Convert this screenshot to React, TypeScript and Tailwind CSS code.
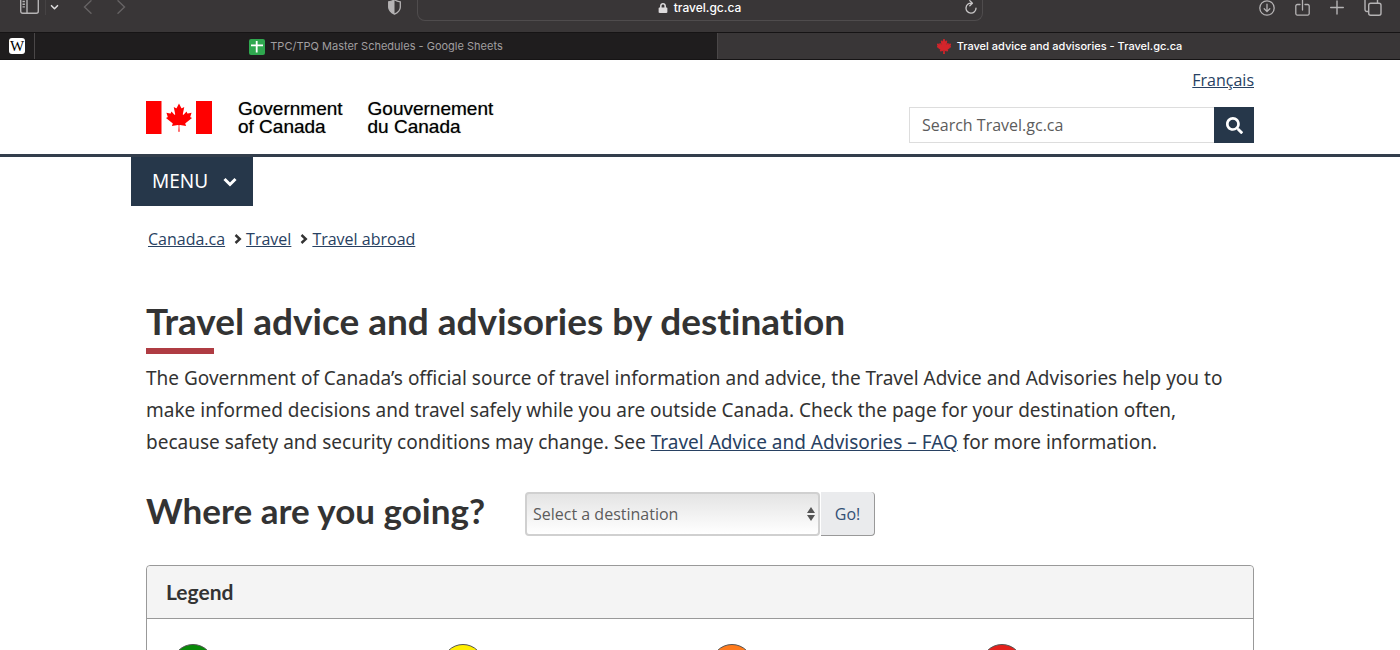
import { FaLock, FaSearch } from 'react-icons/fa'

const LEAF =
  'M4890 4430l-45-863a95 95 0 0 1 111-98l859 151-116-320a65 65 0 0 1 20-73l941-762-212-99a65 65 0 0 1-34-79l186-572-542 115a65 65 0 0 1-73-38l-105-247-423 454a65 65 0 0 1-111-57l204-1052-327 189a65 65 0 0 1-91-27l-332-652-332 652a65 65 0 0 1-91 27l-327-189 204 1052a65 65 0 0 1-111 57l-423-454-105 247a65 65 0 0 1-73 38l-542-115 186 572a65 65 0 0 1-34 79l-212 99 941 762a65 65 0 0 1 20 73l-116 320 859-151a95 95 0 0 1 111 98l-45 863z'

const breadcrumbs = ['Canada.ca', 'Travel', 'Travel abroad']

const riskLevels = [
  { id: 'normal', label: 'Take normal security precautions', color: 'bg-[#088a08]' },
  { id: 'caution', label: 'Exercise a high degree of caution', color: 'bg-[#ffee00]' },
  { id: 'non-essential', label: 'Avoid non-essential travel', color: 'bg-[#ff7a1c]' },
  { id: 'avoid', label: 'Avoid all travel', color: 'bg-[#e4201b]' },
]

function Toolbar() {
  return (
    <div className="grid h-8 grid-cols-[1fr_566px_1fr] items-start text-[#b5b3b4]">
      <div className="flex h-[14px] items-center pr-4 pl-5">
        <button aria-label="Sidebar">
          <svg width="19" height="14" viewBox="0 0 19 14" fill="none" stroke="currentColor" strokeWidth="1.4">
            <rect x="0.7" y="-3" width="17.6" height="16.3" rx="2" />
            <path d="M7 0v13M2.5 1.5h2.4M2.5 4.2h2.4M2.5 6.9h2.4" />
          </svg>
        </button>
        <span className="ml-1.5 h-4 w-px bg-[#464344]" />
        <button aria-label="Tab groups" className="ml-1 text-[#dddbdc]">
          <svg width="9" height="14" viewBox="0 0 9 14" fill="none" stroke="currentColor" strokeWidth="1.6" strokeLinecap="round" strokeLinejoin="round">
            <path d="M1.5 5.7l3 3 3-3" />
          </svg>
        </button>
        <button aria-label="Back" className="ml-6 text-[#666364]">
          <svg width="9" height="14" viewBox="0 0 9 14" fill="none" stroke="currentColor" strokeWidth="1.4" strokeLinecap="round">
            <path d="M8 .8L1.5 7 8 13.2" />
          </svg>
        </button>
        <button aria-label="Forward" className="ml-[25px] text-[#666364]">
          <svg width="9" height="14" viewBox="0 0 9 14" fill="none" stroke="currentColor" strokeWidth="1.4" strokeLinecap="round">
            <path d="M1 .8L7.500 7 1 13.2" />
          </svg>
        </button>
        <button aria-label="Privacy report" className="ml-auto">
          <svg width="13" height="16" viewBox="0 0 13 16" fill="none" stroke="currentColor" strokeWidth="1.3">
            <path d="M6.500 .8c1.800 1.300 3.600 1.900 5.800 2v5.400c0 3-2.300 5.200-5.800 6.900C3 13.400.7 11.200.7 8.200V2.800c2.200-.1 4-.7 5.800-2z" />
            <path d="M6.500 .8v14.300C3 13.400.7 11.200.7 8.200V2.800c2.200-.1 4-.7 5.800-2z" fill="currentColor" stroke="none" />
          </svg>
        </button>
      </div>

      <div className="flex h-[21px] items-start rounded-b-lg border border-t-0 border-[#4f4c4d] pr-[5px] pl-4 text-white">
        <div className="flex flex-1 items-center justify-center gap-1.5 text-[12px] leading-4 font-medium">
          <FaLock size={10} className="text-[#dddbdc]" />
          <span>travel.gc.ca</span>
        </div>
        <button aria-label="Reload" className="text-[#c9c7c8]">
          <svg width="12" height="15" viewBox="0 0 12 15" fill="none" stroke="currentColor" strokeWidth="1.3" strokeLinecap="round" strokeLinejoin="round">
            <path d="M6.500 3.200A5 5 0 1 0 11 8.200M4.800 .6l2.600 2.600-2.600 2.600" />
          </svg>
        </button>
      </div>

      <div className="flex h-[15px] items-center justify-end gap-5 pr-[18px]">
        <button aria-label="Downloads">
          <svg width="16" height="16" viewBox="0 0 16 16" fill="none" stroke="currentColor" strokeWidth="1.3" strokeLinecap="round" strokeLinejoin="round">
            <circle cx="8" cy="8" r="7.200" />
            <path d="M8 4.200v7.200M5.200 8.800L8 11.600l2.800-2.800" />
          </svg>
        </button>
        <button aria-label="Share">
          <svg width="15" height="16" viewBox="0 0 15 16" fill="none" stroke="currentColor" strokeWidth="1.3" strokeLinecap="round" strokeLinejoin="round">
            <path d="M5 4.500H2.300a1.500 1.500 0 0 0-1.500 1.500v7.600a1.500 1.500 0 0 0 1.500 1.500h10.400a1.500 1.500 0 0 0 1.500-1.500V6a1.500 1.500 0 0 0-1.500-1.500H10M7.500 10V-1" />
          </svg>
        </button>
        <button aria-label="New tab">
          <svg width="14" height="16" viewBox="0 0 14 16" fill="none" stroke="currentColor" strokeWidth="1.4" strokeLinecap="round">
            <path d="M7 1v13M.7 7.500h12.600" />
          </svg>
        </button>
        <button aria-label="Tab overview">
          <svg width="18" height="16" viewBox="0 0 18 16" fill="none" stroke="currentColor" strokeWidth="1.4">
            <rect x="4.700" y="3.200" width="12.300" height="12" rx="2" />
            <path d="M4.500 11.500H3a2 2 0 0 1-2-2V-1M13.500 3V0" />
          </svg>
        </button>
      </div>
    </div>
  )
}

function TabBar() {
  return (
    <div className="flex h-7 border-y border-[#161415] bg-[#1f1d1e] text-[11px]">
      <button aria-label="Wikipedia" className="flex w-[35px] items-center justify-center border-r border-[#4a4748]">
        <span className="flex size-4 items-center justify-center rounded-[3px] bg-white font-['Liberation_Serif',serif] text-[15px] leading-none text-black">
          W
        </span>
      </button>
      <button className="flex flex-1 items-center justify-center gap-[5px] pt-px text-[#a19fa0]">
        <svg width="16" height="16" viewBox="0 0 16 16">
          <rect width="16" height="16" rx="2" fill="#2fa84f" />
          <path d="M7.700 2v11.500M2 6.300h12" stroke="#fff" strokeWidth="1.800" />
        </svg>
        TPC/TPQ Master Schedules - Google Sheets
      </button>
      <button className="flex flex-1 items-center justify-center gap-[5px] border-l border-[#4a4748] bg-[#393637] pt-px font-medium text-white">
        <svg width="16" height="15" viewBox="2940 370 3720 4060">
          <path d={LEAF} fill="#d3252b" stroke="#d3252b" strokeWidth="260" />
        </svg>
        Travel advice and advisories - Travel.gc.ca
      </button>
    </div>
  )
}

function SiteHeader() {
  return (
    <header className="border-b-[3px] border-[#333e4c]">
      <div className="mx-auto flex h-[94px] max-w-[1138px] justify-between px-[15px]">
        <a
          href="#"
          className="mt-10 flex items-start font-['Liberation_Sans',sans-serif] text-[19px] leading-[18px] text-black [text-shadow:0_0_1px_#0008]"
        >
          <svg width="66" height="34" viewBox="0 0 66 34" aria-hidden="true">
            <path d="M0 1h15.500v33H0zM50 1h16v33H50z" fill="#f00" />
            <svg x="20" y="3" width="26" height="29" viewBox="2940 370 3720 4060">
              <path d={LEAF} fill="#f00" />
            </svg>
          </svg>
          <span className="ml-[26px]">
            Government
            <br />
            of Canada
          </span>
          <span className="ml-[25px]" lang="fr">
            Gouvernement
            <br />
            du Canada
          </span>
        </a>

        <div className="flex flex-col items-end pt-2">
          <a href="#" lang="fr" className="leading-6 text-[#284162] underline">
            Français
          </a>
          <form className="mt-[15px] flex" onSubmit={(e) => e.preventDefault()}>
            <input
              type="search"
              aria-label="Search Travel.gc.ca"
              placeholder="Search Travel.gc.ca"
              className="h-9 w-[305px] border border-r-0 border-[#dddddd] px-3 placeholder:text-[#5c5c5c]"
            />
            <button aria-label="Search" className="flex h-9 w-10 items-center justify-center bg-[#26374a] text-white">
              <FaSearch size={17} />
            </button>
          </form>
        </div>
      </div>
    </header>
  )
}

export default function App() {
  return (
    <div className="h-screen overflow-hidden bg-white font-['Open_Sans',sans-serif] text-[16px] text-[#333333]">
      <div className="bg-[#393637] font-['Inter',sans-serif]">
        <Toolbar />
        <TabBar />
      </div>

      <SiteHeader />

      <div className="mx-auto max-w-[1138px]">
        <button className="flex h-[49px] w-[122px] items-center gap-[15px] bg-[#26374a] pl-[21px] font-['Noto_Sans',sans-serif] text-[19px] text-white">
          MENU
          <svg width="14" height="10" viewBox="0 0 14 10" fill="none" stroke="currentColor" strokeWidth="3">
            <path d="M1.500 2L7 7.500 12.500 2" />
          </svg>
        </button>
      </div>

      <nav aria-label="Breadcrumb" className="mx-auto mt-[21px] max-w-[1138px] px-[17px]">
        <ol className="flex leading-6">
          {breadcrumbs.map((crumb, i) => (
            <li key={crumb} className="flex items-center">
              {i > 0 && (
                <svg width="8" height="10" viewBox="0 0 8 10" fill="none" stroke="currentColor" strokeWidth="2.400" className="mr-1 ml-[9px]">
                  <path d="M1.500 1L5.800 5 1.500 9" />
                </svg>
              )}
              <a href="#" className="text-[#284162] underline">{crumb}</a>
            </li>
          ))}
        </ol>
      </nav>

      <main className="mx-auto max-w-[1138px] px-[15px]">
        <h1 className="mt-[47px] font-['Lato',sans-serif] text-[37px] leading-[46px] font-bold [font-variant-ligatures:none]">
          Travel advice and advisories by destination
        </h1>
        <div className="mt-1 h-1.5 w-[68px] bg-[#af3c43]" />
        <p className="mt-2 pr-4 font-['Noto_Sans',sans-serif] text-[19px] leading-8">
          The Government of Canada’s official source of travel information and advice, the Travel Advice and Advisories help you to
          make informed decisions and travel safely while you are outside Canada. Check the page for your destination often,
          because safety and security conditions may change. See{' '}
          <a href="#" className="text-[#284162] underline">Travel Advice and Advisories – FAQ</a> for more information.
        </p>

        <form className="mt-[34px] flex items-start" onSubmit={(e) => e.preventDefault()}>
          <label htmlFor="destination" className="w-[379px] font-['Lato',sans-serif] text-[35px] leading-9 font-bold">
            Where are you going?
          </label>
          <div className="relative">
            <select
              id="destination"
              className="h-11 w-[295px] appearance-none rounded border-2 border-[#d0d0d0] bg-linear-to-b from-[#e4e4e4] to-white px-1.5 text-[#5c5c5c]"
            >
              <option>Select a destination</option>
            </select>
            <svg width="8" height="14" viewBox="0 0 8 14" className="pointer-events-none absolute top-[15px] right-[5px]" fill="#555">
              <path d="M4 0l4 6H0zM4 14l4-6H0z" />
            </svg>
          </div>
          <button className="ml-px h-11 w-[54px] rounded-r border-r border-b border-[#999999] bg-[#eaebed] text-[#335075]">Go!</button>
        </form>

        <section className="mt-[29px] rounded border border-[#999999]">
          <h2 className="rounded-t border-b border-[#999999] bg-[#f4f4f4] px-[19px] font-['Lato',sans-serif] text-[21px] leading-[52px] font-bold">
            Legend
          </h2>
          <ul className="grid grid-cols-4 px-3.5 py-[25px]">
            {riskLevels.map((level) => (
              <li key={level.id} className="px-[11px]">
                <span
                  role="img"
                  aria-label={level.label}
                  className={`block size-[42px] rounded-full border border-[#555555] ${level.color}`}
                />
              </li>
            ))}
          </ul>
        </section>
      </main>
    </div>
  )
}
